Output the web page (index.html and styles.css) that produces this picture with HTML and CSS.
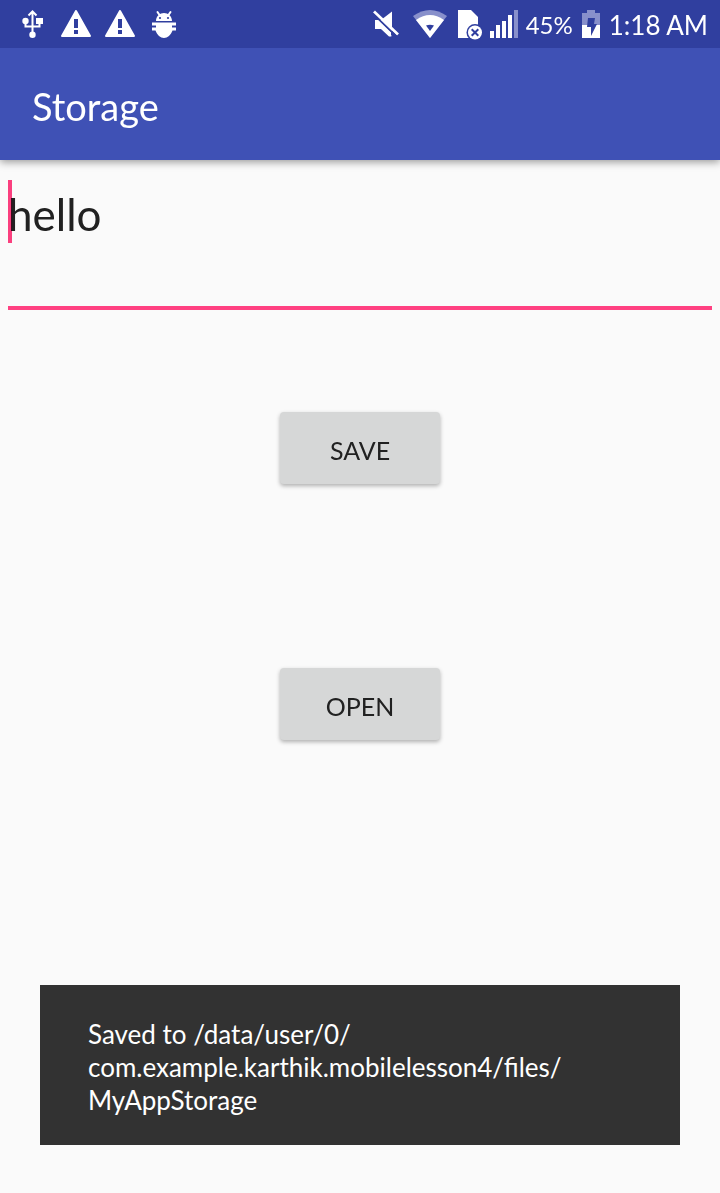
FILE: index.html
```html
<!DOCTYPE html>
<html lang="en">
<head>
<meta charset="utf-8">
<meta name="viewport" content="width=device-width, initial-scale=1">
<title>Storage</title>
<link rel="stylesheet" href="styles.css">
</head>
<body>
<div class="status-bar">
  <div class="notifications">
    <svg class="icon usb" width="22" height="28" viewBox="0 0 22 28" aria-label="USB connected">
      <path d="M10.500 2v22M3.500 11v5.500h14V11M6.500 5.500l4-4 4 4" fill="none" stroke="#fff" stroke-width="2" />
      <circle cx="3.500" cy="11" r="3.200" fill="#fff"/><rect x="14" y="8" width="7" height="6" fill="#fff"/><circle cx="10.500" cy="24.800" r="3.200" fill="#fff"/>
    </svg>
    <svg class="icon" width="30" height="28" viewBox="0 0 30 28" aria-label="Warning">
      <path d="M15 1 29 26H1Z" fill="#fff" stroke="#fff" stroke-width="2" stroke-linejoin="round"/><path d="M13 9h4v9h-4zM13 20h4v4h-4z" fill="#303f9f"/>
    </svg>
    <svg class="icon" width="30" height="28" viewBox="0 0 30 28" aria-label="Warning">
      <path d="M15 1 29 26H1Z" fill="#fff" stroke="#fff" stroke-width="2" stroke-linejoin="round"/><path d="M13 9h4v9h-4zM13 20h4v4h-4z" fill="#303f9f"/>
    </svg>
    <svg class="icon droid" width="24" height="28" viewBox="0 0 24 28" aria-label="USB debugging">
      <path d="M7.500 5 5.500 2M16.500 5 18.500 2" fill="none" stroke="#fff" stroke-width="2" stroke-linecap="round"/>
      <path d="M4 11C4 6 8 3 12 3S20 6 20 11ZM0 12.500h24v3h-4v2h4v3h-3.500C19 25 15.500 28 12 28S5 25 3.500 20.500H0v-3h4v-2H0Z" fill="#fff"/>
      <circle cx="8" cy="8" r="1.100" fill="#303f9f"/><circle cx="16" cy="8" r="1.100" fill="#303f9f"/>
    </svg>
  </div>
  <div class="system">
    <svg class="icon" width="27" height="28" viewBox="0 0 27 28" aria-label="Muted">
      <path d="M2 10h6l11-8.500v25L8 18.500H2Z" fill="#fff"/>
      <path d="M-1.500 3.500 22.500 27.500" stroke="#303f9f" stroke-width="3"/><path d="M1 1.500 25 24.500" stroke="#fff" stroke-width="2.800"/><path d="M2 10h4l12 12v4.500h-2L8 19H2Z" fill="#fff"/><path d="M0 3.800 24 26.800" stroke="#303f9f" stroke-width="1.800"/>
    </svg>
    <svg class="icon wifi" width="34" height="28" viewBox="0 0 34 28" aria-label="Wi-Fi">
      <path d="M0 6Q17-6 34 6L17 28Z" fill="#8890cb"/><path d="M3 10Q17 0 31 10L17 28Z" fill="#fff"/><path d="M13 15.500q4-1.500 8 0L17 21Z" fill="#303f9f"/>
    </svg>
    <svg class="icon" width="24" height="30" viewBox="0 0 24 30" aria-label="No SIM card">
      <path d="M0 0h13l7 7v21H0Z" fill="#fff"/><circle cx="17" cy="22.500" r="8.500" fill="#303f9f"/><circle cx="17" cy="22.500" r="7" fill="#fff"/><path d="m13.700 19.200 6.600 6.600m0-6.600-6.600 6.600" stroke="#303f9f" stroke-width="2"/>
    </svg>
    <svg class="icon" width="28" height="28" viewBox="0 0 28 28" aria-label="Signal strength">
      <path d="M0 21h4v7H0zM6 15h4v13H6zM12 11h4v17h-4zM18 5h4v23h-4z" fill="#fff"/><path d="M24 0h4v28h-4z" fill="#8890cb"/>
    </svg>
    <span class="percent">45%</span>
    <svg class="icon" width="18" height="28" viewBox="0 0 18 28" aria-label="Battery charging">
      <path d="M5 0h8v3h5v12H0V3h5Z" fill="#8890cb"/><path d="M0 15h18v13H0Z" fill="#fff"/><path d="M6 8h7l-1 6h3L9 26v-9H5Z" fill="#303f9f"/>
    </svg>
    <time class="clock">1:18 AM</time>
  </div>
</div>
<header class="app-bar"><h1 class="title">Storage</h1></header>
<main class="content">
  <div class="field">
    <input class="text-input" type="text" value="hello" aria-label="Text to save">
    <span class="caret"></span>
  </div>
  <button class="action" type="button">SAVE</button>
  <button class="action" type="button">OPEN</button>
</main>
<div class="toast" role="status">Saved to /data/user/0/<br>com.example.karthik.mobilelesson4/files/<br>MyAppStorage</div>
</body>
</html>
```
FILE: styles.css
```css
* {
  box-sizing: border-box;
}

body {
  margin: 0;
  min-height: 100vh;
  background: #fafafa;
  color: #212121;
  font-family: Lato, "Liberation Sans", sans-serif;
}

.status-bar {
  position: relative;
  z-index: 1;
  display: flex;
  justify-content: space-between;
  height: 48px;
  padding: 0 12px 0 22px;
  background: #303f9f;
  color: #fff;
  font-size: 26px;
  line-height: 50px;
  white-space: nowrap;
}

.notifications,
.system {
  display: flex;
  align-items: flex-start;
}

.notifications {
  gap: 14px;
}

.system {
  gap: 8px;
}

.icon {
  flex: none;
  margin-top: 10px;
}

.usb,
.droid {
  margin-right: 3px;
}

.droid {
  margin-left: 3px;
}

.wifi {
  margin: 10px 3px 0 5px;
}

.percent {
  margin-right: 1px;
  font-size: 24px;
}

.clock {
  margin-left: 1px;
}

.app-bar {
  position: relative;
  display: flex;
  align-items: center;
  height: 112px;
  padding: 4px 32px 0;
  background: #3f51b5;
  color: #fff;
  box-shadow: 0 2px 8px rgba(0, 0, 0, 0.4);
}

.title {
  margin: 0;
  font-size: 38px;
  font-weight: 400;
  line-height: 48px;
}

.content {
  display: flex;
  flex-direction: column;
  align-items: center;
  padding: 20px 8px;
}

.field {
  position: relative;
  width: 100%;
  margin-bottom: 102px;
  border-bottom: 4px solid #ff4081;
}

.text-input {
  display: block;
  width: 100%;
  height: 68px;
  margin-bottom: 58px;
  padding: 0;
  border: 0;
  outline: 0;
  background: transparent;
  color: inherit;
  font: 44px/68px Lato, "Liberation Sans", sans-serif;
}

.caret {
  position: absolute;
  top: 0;
  left: 0;
  width: 4px;
  height: 63px;
  background: #ff4081;
  mix-blend-mode: multiply;
}

.action {
  width: 160px;
  height: 72px;
  margin-bottom: 184px;
  padding: 4px 0 0;
  border: 0;
  border-radius: 4px;
  background: #d6d7d7;
  color: #212121;
  font: 25px/32px Lato, "Liberation Sans", sans-serif;
  box-shadow: 0 2px 4px rgba(0, 0, 0, 0.3);
}

.action:last-child {
  margin-bottom: 0;
}

.toast {
  position: fixed;
  right: 40px;
  bottom: 48px;
  left: 40px;
  padding: 33px 48px 28px;
  background: #323232;
  color: #fff;
  font-size: 26px;
  line-height: 33px;
}
```
